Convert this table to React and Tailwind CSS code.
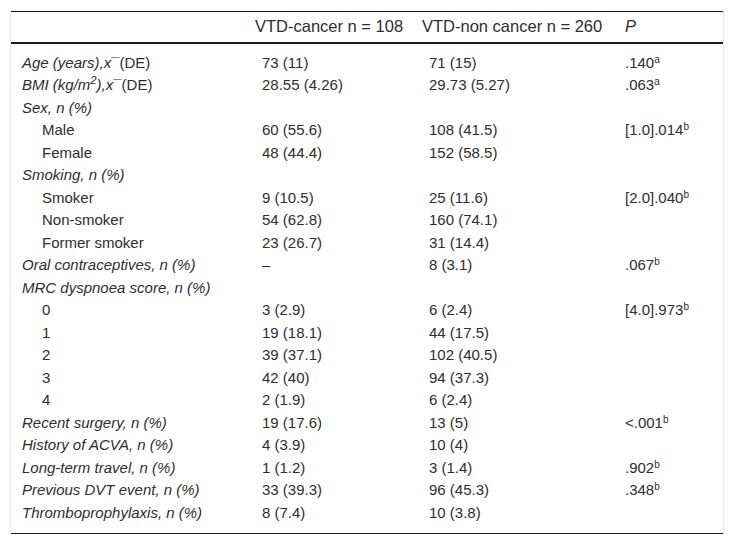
import React from "react";

const rows = [
  { label: <><i>Age (years),x</i>¯(DE)</>, a: "73 (11)", b: "71 (15)", p: ".140", s: "a" },
  { label: <><i>BMI (kg/m<sup>2</sup>),x</i>¯(DE)</>, a: "28.55 (4.26)", b: "29.73 (5.27)", p: ".063", s: "a" },
  { label: <i>Sex, n (%)</i> },
  { label: "Male", ind: true, a: "60 (55.6)", b: "108 (41.5)", p: "[1.0].014", s: "b" },
  { label: "Female", ind: true, a: "48 (44.4)", b: "152 (58.5)" },
  { label: <i>Smoking, n (%)</i> },
  { label: "Smoker", ind: true, a: "9 (10.5)", b: "25 (11.6)", p: "[2.0].040", s: "b" },
  { label: "Non-smoker", ind: true, a: "54 (62.8)", b: "160 (74.1)" },
  { label: "Former smoker", ind: true, a: "23 (26.7)", b: "31 (14.4)" },
  { label: <i>Oral contraceptives, n (%)</i>, a: "–", b: "8 (3.1)", p: ".067", s: "b" },
  { label: <i>MRC dyspnoea score, n (%)</i> },
  { label: "0", ind: true, a: "3 (2.9)", b: "6 (2.4)", p: "[4.0].973", s: "b" },
  { label: "1", ind: true, a: "19 (18.1)", b: "44 (17.5)" },
  { label: "2", ind: true, a: "39 (37.1)", b: "102 (40.5)" },
  { label: "3", ind: true, a: "42 (40)", b: "94 (37.3)" },
  { label: "4", ind: true, a: "2 (1.9)", b: "6 (2.4)" },
  { label: <i>Recent surgery, n (%)</i>, a: "19 (17.6)", b: "13 (5)", p: "<.001", s: "b" },
  { label: <i>History of ACVA, n (%)</i>, a: "4 (3.9)", b: "10 (4)" },
  { label: <i>Long-term travel, n (%)</i>, a: "1 (1.2)", b: "3 (1.4)", p: ".902", s: "b" },
  { label: <i>Previous DVT event, n (%)</i>, a: "33 (39.3)", b: "96 (45.3)", p: ".348", s: "b" },
  { label: <i>Thromboprophylaxis, n (%)</i>, a: "8 (7.4)", b: "10 (3.8)" },
];

export default function App() {
  const last = rows.length - 1;
  return (
    <div
      className="w-[734px] h-[545px] bg-white pl-[10px] pt-[11px] text-[15px] text-[#2e2e2e]"
      style={{ fontFamily: '"Liberation Sans", Arial, sans-serif' }}
    >
      <div className="w-[714px] border-x border-[#ebebeb]">
        <table className="w-[712px] border-collapse table-fixed">
          <colgroup>
            <col className="w-[234px]" />
            <col className="w-[167px]" />
            <col className="w-[203px]" />
            <col className="w-[108px]" />
          </colgroup>
          <thead>
            <tr className="border-t border-[#1a1a1a] border-b-2 border-b-[#1a1a1a] text-[16.5px]">
              <th className="h-[31px] p-0 pl-[10px] text-left font-normal"></th>
              <th className="h-[31px] p-0 pl-[10px] text-left font-normal whitespace-nowrap">VTD-cancer n = 108</th>
              <th className="h-[31px] p-0 pl-[10px] text-left font-normal whitespace-nowrap">VTD-non cancer n = 260</th>
              <th className="h-[31px] p-0 pl-[10px] text-left font-normal"><i>P</i></th>
            </tr>
          </thead>
          <tbody className="border-b border-[#1a1a1a]">
            {rows.map((r, i) => {
              const pad = i === 0 ? "pt-[8px]" : i === last ? "pb-[9px]" : "";
              return (
                <tr key={i} className="leading-[22.5px]">
                  <td className={`p-0 whitespace-nowrap ${r.ind ? "pl-[31px]" : "pl-[11px]"} ${pad}`}>{r.label}</td>
                  <td className={`p-0 pl-[17px] whitespace-nowrap ${pad}`}>{r.a}</td>
                  <td className={`p-0 pl-[17px] whitespace-nowrap ${pad}`}>{r.b}</td>
                  <td className={`p-0 pl-[10px] whitespace-nowrap ${pad}`}>
                    {r.p}
                    {r.s && <sup className="text-[10px]">{r.s}</sup>}
                  </td>
                </tr>
              );
            })}
          </tbody>
        </table>
      </div>
    </div>
  );
}
